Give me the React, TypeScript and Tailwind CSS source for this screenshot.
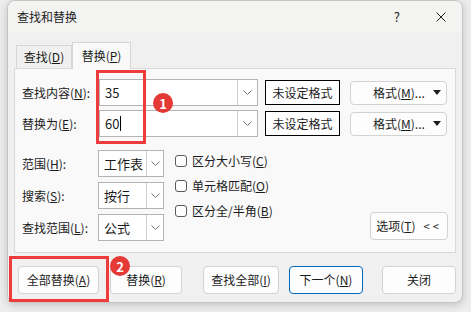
import React from 'react';

function Chevron() {
  return (
    <svg width="9" height="5" viewBox="0 0 9 5">
      <path d="M0.5 0.5 L4.5 4.5 L8.5 0.5" stroke="#707070" strokeWidth="1" fill="none" />
    </svg>
  );
}

function Caret() {
  return (
    <svg width="8" height="5" viewBox="0 0 8 5">
      <path d="M0 0 H8 L4 5 Z" fill="#1b1b1b" />
    </svg>
  );
}

function Combo({ text, w, dd }: { text: React.ReactNode; w: string; dd: string }) {
  return (
    <div className={`${w} h-[27px] flex border border-[#b3b3b3] bg-white`}>
      <div className="flex-1 flex items-center pl-[5px] text-[13px]">{text}</div>
      <div className={`${dd} border-l border-[#cfcfcf] flex items-center justify-center`}>
        <Chevron />
      </div>
    </div>
  );
}

function Btn({ children, className = '' }: { children: React.ReactNode; className?: string }) {
  return (
    <div className={`h-[28px] rounded-[4px] border border-[#d2d2d2] bg-[#fdfdfd] flex items-center justify-center ${className}`}>
      {children}
    </div>
  );
}

function Check({ children }: { children: React.ReactNode }) {
  return (
    <div className="h-[16px] flex items-center">
      <div className="w-[12px] h-[12px] rounded-[3px] border border-[#5a5a5a] bg-white" />
      <span className="ml-[5px]">{children}</span>
    </div>
  );
}

function FormatBtn() {
  return (
    <div className="ml-[10px] w-[97px] h-[24px] rounded-[4px] border border-[#d2d2d2] bg-[#fdfdfd] flex items-center pl-[22px] pr-[5px]">
      <span>格式(<u>M</u>)...</span>
      <span className="ml-auto"><Caret /></span>
    </div>
  );
}

export default function App() {
  return (
    <div className="w-[471px] h-[312px] bg-[#ededed] relative overflow-hidden font-['Noto_Sans_CJK_SC','Noto_Sans',sans-serif] text-[12px] leading-none text-[#1b1b1b]">
      <div className="ml-[7px] w-[456px] h-[303px] rounded-[8px] border border-[#c4c4c4] bg-[#f0f0f0] shadow-[0_2px_8px_rgba(0,0,0,0.18)] overflow-hidden flex flex-col">
        {/* title bar */}
        <div className="h-[31px] shrink-0 bg-[#f3f3f1] flex items-center pl-[9px] pr-[16px]">
          <span>查找和替换</span>
          <span className="ml-auto text-[13px]">?</span>
          <svg className="ml-[36px]" width="10" height="10" viewBox="0 0 10 10">
            <path d="M0.5 0.5 L9.5 9.5 M9.5 0.5 L0.5 9.5" stroke="#222" strokeWidth="1" />
          </svg>
        </div>

        <div className="flex-1 px-[6px]">
          {/* tabs */}
          <div className="h-[26px] mt-[10px] pl-[2px] flex items-end">
            <div className="w-[56px] h-[23px] border border-b-0 border-[#d6d6d6] bg-[#f0f0f0] flex items-center justify-center">
              查找(<u>D</u>)
            </div>
            <div className="relative z-10 -mb-px w-[59px] h-[27px] border border-b-0 border-[#d6d6d6] bg-[#f9f9f9] flex items-center justify-center">
              替换(<u>P</u>)
            </div>
          </div>

          {/* panel */}
          <div className="h-[185px] border border-[#d9d9d9] bg-[#f9f9f9] px-[7px] pt-[10px]">
            <div className="h-[27px] flex items-center">
              <div className="w-[77px]">查找内容(<u>N</u>):</div>
              <Combo text="35" w="w-[159px]" dd="w-[20px]" />
              <div className="ml-[7px] w-[75px] h-[25px] border border-black bg-white flex items-center justify-center">未设定格式</div>
              <FormatBtn />
            </div>
            <div className="h-[27px] mt-[4px] flex items-center">
              <div className="w-[77px]">替换为(<u>E</u>):</div>
              <Combo
                text={<span className="flex items-center">60<span className="ml-px w-px h-[15px] bg-black" /></span>}
                w="w-[159px]"
                dd="w-[20px]"
              />
              <div className="ml-[7px] w-[75px] h-[25px] border border-black bg-white flex items-center justify-center">未设定格式</div>
              <FormatBtn />
            </div>

            <div className="mt-[13px] flex">
              <div className="flex flex-col gap-[5px]">
                <div className="h-[27px] flex items-center">
                  <div className="w-[76px]">范围(<u>H</u>):</div>
                  <Combo text="工作表" w="w-[66px]" dd="w-[17px]" />
                </div>
                <div className="h-[27px] flex items-center">
                  <div className="w-[76px]">搜索(<u>S</u>):</div>
                  <Combo text="按行" w="w-[66px]" dd="w-[17px]" />
                </div>
                <div className="h-[27px] flex items-center">
                  <div className="w-[76px]">查找范围(<u>L</u>):</div>
                  <Combo text="公式" w="w-[66px]" dd="w-[17px]" />
                </div>
              </div>
              <div className="ml-[11px] pt-[3px] flex flex-col gap-[9px]">
                <Check>区分大小写(<u>C</u>)</Check>
                <Check>单元格匹配(<u>O</u>)</Check>
                <Check>区分全/半角(<u>B</u>)</Check>
              </div>
              <Btn className="ml-auto self-end mb-px w-[78px]">
                选项(<u>T</u>)<span className="ml-[8px] text-[11px] tracking-[3px]">&lt;&lt;</span>
              </Btn>
            </div>
          </div>

          {/* bottom buttons */}
          <div className="mt-[13px] flex">
            <Btn className="ml-[4px] w-[81px]">全部替换(<u>A</u>)</Btn>
            <Btn className="ml-[11px] w-[72px]">替换(<u>R</u>)</Btn>
            <Btn className="ml-[21px] w-[76px]">查找全部(<u>I</u>)</Btn>
            <Btn className="ml-[10px] w-[74px] !border-[#0067c0]">下一个(<u>N</u>)</Btn>
            <Btn className="ml-[19px] w-[74px]">关闭</Btn>
          </div>
        </div>
      </div>

      {/* annotations */}
      <div className="absolute left-[96px] top-[70px] w-[50px] h-[74px] border-[3px] border-[#ee3b3b]" />
      <div className="absolute left-[153px] top-[93px] w-[20px] h-[20px] rounded-full bg-[#e53935] text-white font-semibold text-[13px] flex items-center justify-center">1</div>
      <div className="absolute left-[9px] top-[256px] w-[100px] h-[46px] border-[3px] border-[#ee3b3b]" />
      <div className="absolute left-[110px] top-[256px] w-[20px] h-[20px] rounded-full bg-[#e53935] text-white font-semibold text-[13px] flex items-center justify-center">2</div>
    </div>
  );
}
